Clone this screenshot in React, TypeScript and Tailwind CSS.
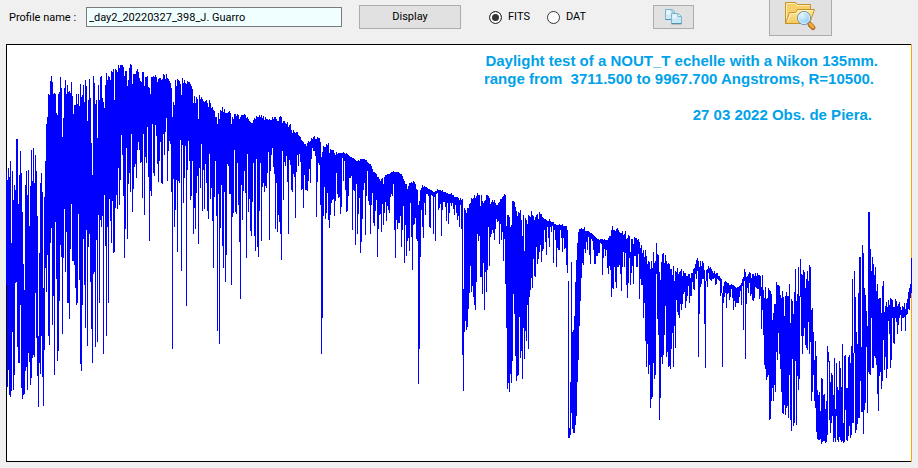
import React from "react";

// First pixel column of the profile, both tables start here
const FIRST_X = 6;

// Upper edge of the trace, one value per column
const TOPS = [
  171, 180, 168, 177,
  161, 243, 171, 200, 185, 190, 139, 139, 204, 175,
  151, 173, 212, 264, 290, 185, 171, 195, 170, 226,
  186, 150, 181, 148, 183, 155, 171, 216, 336, 253,
  183, 173, 192, 288, 197, 161, 124, 117, 94, 95,
  81, 76, 82, 94, 93, 94, 113, 115, 94, 92,
  77, 88, 137, 118, 88, 80, 94, 85, 92, 91,
  93, 82, 96, 114, 105, 105, 94, 104, 94, 106,
  84, 97, 95, 85, 102, 80, 86, 121, 100, 79,
  98, 143, 175, 76, 83, 104, 100, 138, 85, 100,
  77, 76, 98, 102, 108, 85, 73, 80, 76, 77,
  80, 71, 72, 69, 100, 69, 70, 72, 65, 68,
  65, 65, 65, 67, 76, 71, 71, 86, 80, 68,
  64, 65, 84, 74, 74, 74, 71, 69, 72, 78,
  81, 82, 72, 72, 86, 77, 77, 76, 87, 88,
  94, 77, 77, 76, 77, 75, 77, 82, 79, 78,
  78, 80, 79, 74, 75, 79, 74, 78, 79, 81,
  83, 88, 117, 102, 105, 80, 86, 79, 80, 81,
  84, 95, 78, 83, 80, 83, 84, 81, 82, 82,
  84, 86, 89, 103, 96, 103, 97, 99, 119, 95,
  99, 97, 99, 101, 102, 101, 100, 103, 107, 100,
  103, 108, 107, 110, 111, 117, 117, 124, 113, 119,
  110, 111, 107, 112, 109, 113, 113, 113, 112, 111,
  113, 124, 117, 119, 114, 114, 116, 114, 115, 119,
  117, 115, 115, 115, 114, 115, 118, 117, 119, 121,
  122, 123, 123, 120, 118, 119, 116, 117, 117, 115,
  117, 115, 118, 116, 120, 117, 119, 119, 120, 119,
  120, 120, 117, 119, 117, 117, 119, 121, 121, 117,
  116, 117, 123, 121, 121, 123, 124, 122, 127, 125,
  124, 130, 133, 130, 132, 133, 132, 132, 135, 136,
  137, 140, 141, 142, 144, 144, 146, 143, 141, 142,
  141, 138, 139, 137, 136, 139, 139, 137, 138, 138,
  142, 157, 152, 146, 147, 147, 144, 145, 143, 153,
  149, 150, 150, 150, 153, 155, 152, 154, 153, 153,
  153, 153, 153, 152, 153, 154, 153, 154, 155, 156,
  157, 157, 158, 158, 159, 160, 161, 161, 160, 161,
  159, 159, 159, 159, 159, 160, 160, 162, 163, 164,
  164, 166, 169, 172, 172, 173, 174, 177, 177, 179,
  181, 179, 178, 184, 177, 175, 175, 174, 174, 174,
  173, 172, 172, 171, 172, 172, 172, 172, 172, 173,
  174, 174, 176, 179, 181, 184, 184, 189, 186, 183,
  183, 182, 183, 181, 182, 184, 189, 190, 205, 201,
  190, 188, 185, 187, 186, 187, 187, 188, 189, 189,
  190, 190, 191, 192, 192, 191, 191, 189, 190, 190,
  190, 191, 190, 192, 192, 192, 193, 193, 194, 194,
  194, 193, 195, 195, 197, 197, 197, 197, 198, 200,
  198, 200, 199, 289, 208, 210, 213, 208, 208, 204,
  203, 198, 199, 198, 195, 198, 196, 193, 195, 195,
  206, 195, 201, 203, 201, 200, 195, 195, 196, 198,
  204, 202, 200, 202, 200, 203, 205, 205, 203, 202,
  199, 199, 197, 196, 194, 195, 226, 215, 215, 217,
  227, 225, 201, 201, 202, 207, 211, 216, 212, 213,
  210, 220, 236, 215, 251, 218, 220, 224, 215, 216,
  217, 211, 215, 216, 220, 217, 215, 214, 219, 212,
  214, 214, 217, 218, 219, 219, 220, 221, 221, 219,
  221, 222, 222, 222, 224, 224, 225, 225, 225, 224,
  225, 225, 224, 226, 226, 226, 226, 230, 281, 428,
  382, 262, 332, 330, 316, 282, 260, 243, 232, 229,
  229, 228, 229, 229, 227, 231, 231, 231, 231, 232,
  233, 233, 234, 235, 236, 237, 238, 239, 239, 240,
  239, 239, 239, 240, 239, 240, 240, 240, 238, 236,
  236, 230, 226, 230, 230, 231, 229, 228, 230, 232,
  233, 233, 231, 235, 234, 231, 239, 238, 235, 236,
  252, 239, 239, 244, 237, 238, 238, 240, 239, 242,
  248, 245, 253, 250, 257, 250, 256, 264, 261, 262,
  269, 261, 268, 252, 263, 261, 243, 254, 255, 272,
  280, 262, 254, 253, 263, 255, 261, 264, 263, 264,
  269, 269, 275, 266, 281, 271, 272, 268, 274, 272,
  271, 269, 276, 271, 273, 273, 276, 276, 274, 274,
  278, 273, 273, 269, 268, 264, 260, 258, 261, 267,
  261, 266, 261, 263, 270, 281, 270, 269, 266, 268,
  267, 269, 271, 273, 271, 274, 273, 273, 276, 276,
  278, 279, 293, 286, 282, 281, 282, 283, 283, 285,
  285, 284, 285, 285, 286, 287, 288, 287, 287, 286,
  285, 283, 279, 277, 269, 272, 277, 276, 274, 272,
  273, 278, 274, 274, 276, 273, 276, 273, 275, 275,
  276, 287, 275, 290, 298, 287, 299, 298, 288, 290,
  291, 294, 320, 313, 304, 304, 282, 285, 285, 286,
  295, 298, 291, 297, 316, 296, 292, 296, 296, 284,
  323, 299, 301, 314, 292, 269, 301, 294, 267, 296,
  259, 274, 275, 270, 272, 288, 279, 271, 281, 265,
  267, 310, 308, 332, 360, 341, 356, 390, 395, 392,
  411, 378, 379, 395, 394, 409, 401, 346, 352, 361,
  382, 373, 375, 395, 358, 409, 363, 387, 390, 361,
  368, 387, 344, 423, 356, 355, 388, 388, 357, 355,
  363, 346, 279, 353, 271, 297, 332, 344, 293, 257,
  257, 347, 245, 253, 288, 295, 311, 326, 212, 212,
  249, 271, 257, 264, 275, 267, 291, 284, 299, 298,
  298, 313, 286, 281, 312, 306, 302, 307, 300, 305,
  298, 299, 300, 307, 307, 299, 301, 306, 304, 302,
  307, 310, 306, 307, 303, 309, 303, 299, 292, 288,
  284, 258,
];

// Lower edge of the trace, one value per column
const BOTTOMS = [
  285, 387, 370, 395,
  397, 391, 332, 390, 375, 283, 282, 347, 363, 363,
  305, 388, 399, 395, 394, 371, 367, 390, 353, 362,
  385, 378, 358, 355, 357, 293, 338, 376, 407, 363,
  374, 336, 377, 406, 350, 268, 292, 255, 336, 345,
  243, 228, 325, 296, 375, 222, 279, 361, 351, 301,
  245, 257, 334, 258, 209, 272, 232, 303, 303, 319,
  249, 204, 261, 261, 265, 288, 305, 303, 214, 280,
  364, 371, 305, 239, 285, 328, 230, 346, 247, 234,
  282, 329, 363, 274, 272, 347, 240, 342, 215, 303,
  220, 227, 216, 354, 195, 246, 336, 227, 303, 199,
  221, 243, 201, 253, 252, 208, 195, 209, 168, 205,
  180, 135, 155, 196, 258, 229, 148, 239, 184, 173,
  192, 134, 212, 189, 167, 164, 178, 150, 142, 150,
  163, 162, 198, 134, 215, 157, 163, 127, 177, 241,
  191, 196, 124, 173, 176, 125, 136, 164, 182, 161,
  142, 183, 184, 134, 155, 132, 118, 181, 151, 141,
  144, 192, 349, 179, 227, 210, 180, 252, 181, 183,
  140, 271, 145, 203, 178, 146, 306, 170, 141, 161,
  200, 196, 161, 234, 208, 229, 193, 176, 244, 168,
  188, 144, 211, 170, 209, 164, 183, 211, 219, 154,
  199, 188, 221, 268, 197, 161, 216, 331, 194, 344,
  228, 185, 246, 268, 192, 282, 255, 164, 166, 194,
  194, 285, 217, 213, 150, 212, 214, 163, 205, 242,
  299, 185, 220, 191, 171, 193, 258, 154, 212, 199,
  231, 236, 202, 163, 236, 251, 159, 247, 257, 211,
  163, 241, 187, 183, 192, 186, 188, 173, 152, 240,
  171, 155, 148, 167, 174, 229, 183, 232, 215, 222,
  234, 260, 151, 200, 162, 166, 156, 182, 234, 160,
  165, 190, 192, 174, 177, 218, 172, 155, 166, 154,
  162, 190, 189, 208, 175, 190, 190, 191, 181, 169,
  183, 159, 148, 151, 151, 156, 217, 182, 163, 165,
  205, 354, 318, 216, 187, 219, 213, 193, 220, 228,
  215, 203, 200, 199, 216, 201, 173, 194, 198, 197,
  214, 207, 158, 181, 161, 190, 212, 211, 196, 178,
  178, 176, 230, 190, 191, 245, 184, 234, 214, 198,
  253, 242, 219, 190, 183, 235, 196, 171, 201, 205,
  234, 205, 193, 223, 226, 211, 200, 257, 229, 215,
  214, 232, 204, 225, 213, 202, 221, 206, 210, 213,
  197, 194, 196, 184, 230, 258, 220, 229, 223, 223,
  216, 247, 230, 206, 263, 225, 256, 241, 238, 251,
  203, 237, 270, 225, 224, 218, 239, 241, 384, 349,
  257, 210, 227, 238, 203, 215, 194, 194, 196, 227,
  228, 195, 196, 234, 197, 241, 194, 193, 210, 208,
  204, 236, 210, 202, 202, 207, 221, 203, 224, 213,
  203, 206, 203, 209, 215, 205, 213, 220, 216, 227,
  205, 229, 355, 391, 332, 321, 330, 327, 309, 293,
  266, 292, 286, 297, 305, 310, 282, 234, 241, 236,
  277, 277, 294, 263, 310, 272, 292, 270, 227, 266,
  237, 234, 230, 233, 240, 229, 219, 222, 221, 244,
  224, 240, 232, 261, 239, 284, 328, 389, 383, 392,
  374, 383, 361, 294, 314, 356, 381, 376, 375, 317,
  358, 351, 379, 328, 359, 331, 341, 305, 349, 297,
  290, 278, 288, 259, 276, 277, 247, 264, 259, 252,
  245, 262, 251, 249, 230, 242, 255, 227, 238, 247,
  227, 232, 226, 263, 230, 240, 267, 248, 250, 250,
  230, 238, 252, 238, 249, 248, 265, 273, 438, 438,
  435, 413, 429, 433, 433, 425, 416, 382, 360, 326,
  301, 278, 263, 265, 249, 253, 242, 250, 237, 255,
  264, 239, 241, 250, 264, 264, 256, 256, 253, 253,
  243, 244, 275, 258, 249, 256, 250, 268, 274, 266,
  270, 297, 288, 289, 267, 282, 288, 267, 267, 265,
  274, 291, 267, 252, 267, 253, 285, 298, 283, 258,
  285, 273, 266, 284, 256, 256, 267, 267, 254, 299,
  279, 285, 285, 318, 303, 341, 367, 344, 374, 365,
  408, 399, 397, 363, 379, 375, 274, 319, 335, 420,
  398, 357, 364, 355, 335, 306, 357, 352, 367, 366,
  369, 349, 333, 367, 326, 348, 300, 312, 315, 318,
  304, 310, 304, 294, 292, 308, 301, 296, 286, 303,
  296, 296, 282, 289, 290, 274, 279, 271, 357, 314,
  287, 284, 279, 279, 324, 368, 281, 287, 273, 279,
  280, 281, 279, 279, 278, 285, 284, 279, 280, 281,
  296, 293, 367, 303, 297, 293, 308, 294, 293, 300,
  297, 289, 298, 310, 301, 307, 303, 303, 303, 297,
  291, 305, 286, 330, 281, 359, 304, 288, 293, 283,
  296, 294, 300, 301, 298, 287, 288, 289, 289, 299,
  296, 329, 310, 335, 365, 369, 380, 377, 375, 420,
  419, 401, 388, 401, 385, 392, 352, 360, 333, 354,
  369, 392, 413, 414, 405, 415, 408, 406, 418, 375,
  420, 431, 359, 426, 423, 361, 425, 376, 390, 379,
  297, 336, 354, 336, 328, 345, 348, 350, 322, 354,
  342, 401, 392, 375, 401, 408, 432, 439, 440, 440,
  439, 444, 442, 441, 441, 443, 442, 435, 362, 420,
  433, 423, 416, 442, 438, 442, 416, 440, 442, 437,
  440, 442, 441, 443, 442, 410, 440, 441, 436, 426,
  438, 435, 423, 423, 353, 433, 430, 424, 418, 418,
  381, 412, 412, 434, 410, 403, 347, 413, 372, 374,
  375, 318, 368, 368, 356, 358, 365, 394, 411, 376,
  372, 389, 381, 340, 370, 357, 378, 369, 321, 334,
  368, 360, 318, 343, 344, 318, 322, 334, 325, 318,
  315, 331, 318, 318, 317, 331, 315, 314, 309, 310,
  298, 293,
];

const tracePath = TOPS.map((top, i) => `M${FIRST_X + i} ${top}h1V${BOTTOMS[i]}h-1z`).join("");

const CopyIcon = () => (
  <svg width="18" height="18" viewBox="0 0 18 18" aria-hidden="true">
    <g stroke="#7fb4cd">
      <path d="M.5 1.5h7l2 2v8h-9z" fill="#cfeaf6" />
      <path d="M1.5 2.5h4v4h-4z" fill="#e9f7fd" stroke="none" />
      <path d="M7 1.5v2.500h2.500" fill="#f6fcff" />
      <path d="M6.500 5.500h7l3 3v7h-10z" fill="#c6e8f6" />
      <path d="M7.500 6.500h4v4h-4z" fill="#e6f6fd" stroke="none" />
      <path d="M13 5.500v3h3" fill="#f6fcff" />
    </g>
    <path d="M.5 11.500h5.500M6.500 15.500h10" stroke="#4d8fae" />
    <path d="M6.500 16.500h10" stroke="#8d9ba2" strokeOpacity="0.5" />
  </svg>
);

const FolderSearchIcon = () => (
  <svg width="32" height="32" viewBox="0 0 32 32" aria-hidden="true">
    <defs>
      <linearGradient id="folder" x1="0" y1="0" x2="0" y2="1">
        <stop offset="0" stopColor="#ffe79b" />
        <stop offset="1" stopColor="#f6c95c" />
      </linearGradient>
      <radialGradient id="lens" cx="0.35" cy="0.3" r="0.8">
        <stop offset="0" stopColor="#e4f6ff" />
        <stop offset="1" stopColor="#7fc3f2" />
      </radialGradient>
    </defs>
    <path d="M.5 22.5v-21h10l2 2h13v6l-3 13z" fill="#f6cf68" stroke="#c8922a" />
    <path d="M1.500 21v-18.500h8l2 2h13" fill="none" stroke="#ffedb0" />
    <path d="M.5 22.500l4-11h6l2-3h17l-5 14z" fill="url(#folder)" stroke="#c8922a" />
    <path d="M2.500 21l3-8.500h6l2-3h14" fill="none" stroke="#fff3c4" />
    <path d="M25 23.500l3 3" stroke="#a56d26" strokeWidth="5" strokeLinecap="round" />
    <path d="M25 23l3 3" stroke="#f5a93c" strokeWidth="3" strokeLinecap="round" />
    <circle cx="19" cy="17" r="6.500" fill="url(#lens)" stroke="#6c8fae" />
    <circle cx="19" cy="17" r="5.500" fill="none" stroke="#e3f3fc" />
  </svg>
);

type FormatRadioProps = {
  value: string;
  checked: boolean;
  onSelect: (value: string) => void;
};

const FormatRadio = ({ value, checked, onSelect }: FormatRadioProps) => (
  <label className="flex h-6 items-center gap-1.5">
    <input
      type="radio"
      name="format"
      value={value}
      checked={checked}
      onChange={() => onSelect(value)}
      className="size-[13px] appearance-none rounded-full border border-[#333] bg-white checked:bg-[#333] checked:shadow-[inset_0_0_0_2px_#fff]"
    />
    {value}
  </label>
);

export default function App() {
  const [name, setName] = React.useState("_day2_20220327_398_J. Guarro");
  const [format, setFormat] = React.useState("FITS");

  return (
    <main className="min-h-screen bg-[#f0f0f0] px-1.5 pb-1.5 font-['Roboto','Liberation_Sans',sans-serif] text-[11px] text-black">
      <div className="flex h-11 items-start overflow-hidden pt-[5px]">
        <label htmlFor="profile-name" className="ml-[3px] h-6 w-[77px] shrink-0 whitespace-nowrap leading-[26px]">
          Profile name :
        </label>
        <input
          id="profile-name"
          type="text"
          value={name}
          onChange={(e) => setName(e.target.value)}
          className="mt-0.5 h-5 w-64 border border-[#7a7a7a] bg-[#f0ffff] px-0.5 outline-none"
        />
        <button type="button" className="ml-[17px] h-6 w-[102px] shrink-0 border border-[#adadad] bg-[#e1e1e1]">
          Display
        </button>
        <fieldset className="ml-7 flex w-[130px] shrink-0 gap-[17px]">
          <FormatRadio value="FITS" checked={format === "FITS"} onSelect={setFormat} />
          <FormatRadio value="DAT" checked={format === "DAT"} onSelect={setFormat} />
        </fieldset>
        <button
          type="button"
          aria-label="Copy"
          className="ml-[34px] flex h-6 w-[41px] shrink-0 items-center justify-center border border-[#adadad] bg-[#e1e1e1]"
        >
          <CopyIcon />
        </button>
        <button
          type="button"
          aria-label="Browse profiles"
          className="-mt-2 ml-[75px] flex h-[39px] w-[63px] shrink-0 items-center justify-center border border-[#adadad] bg-[#e1e1e1]"
        >
          <FolderSearchIcon />
        </button>
      </div>

      <div className="relative">
        <svg
          viewBox="6 44 906 418"
          className="block h-auto w-full bg-white"
          shapeRendering="crispEdges"
          role="img"
          aria-label="Spectral profile"
        >
          <path d="M6 44h905v1H7v416h904v1H6z" fill="#000" />
          <path d="M911 44h1v418h-1z" fill="#ffa500" />
          <path d={tracePath} fill="#00f" />
        </svg>
        <div className="absolute top-2 right-[34px] text-right font-['Liberation_Sans',sans-serif] text-[15px] leading-[18px] font-bold whitespace-pre text-[#00a2e8]">
          <p>Daylight test of a NOUT_T echelle with a Nikon 135mm.</p>
          <p className="pr-1">range from  3711.500 to 9967.700 Angstroms, R=10500.</p>
          <p className="mt-[18px] pr-1.5">27 03 2022 Obs. de Piera.</p>
        </div>
      </div>
    </main>
  );
}
